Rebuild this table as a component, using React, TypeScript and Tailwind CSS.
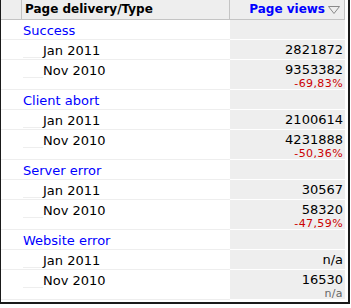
type Row = { label: string; value: string; change?: string; changeMuted?: boolean };
type Group = { name: string; rows: Row[] };

const groups: Group[] = [
  {
    name: "Success",
    rows: [
      { label: "Jan 2011", value: "2821872" },
      { label: "Nov 2010", value: "9353382", change: "-69,83%" },
    ],
  },
  {
    name: "Client abort",
    rows: [
      { label: "Jan 2011", value: "2100614" },
      { label: "Nov 2010", value: "4231888", change: "-50,36%" },
    ],
  },
  {
    name: "Server error",
    rows: [
      { label: "Jan 2011", value: "30567" },
      { label: "Nov 2010", value: "58320", change: "-47,59%" },
    ],
  },
  {
    name: "Website error",
    rows: [
      { label: "Jan 2011", value: "n/a" },
      { label: "Nov 2010", value: "16530", change: "n/a", changeMuted: true },
    ],
  },
];

const SortIcon = () => (
  <svg width="12" height="8" viewBox="0 0 12 8" className="ml-[3px]">
    <path d="M0.5 0.5 L11.5 0.5 L6 7.5 Z" fill="none" stroke="#8a8a8a" strokeWidth="1" />
  </svg>
);

export default function App() {
  return (
    <div
      className="w-[350px] h-[304px] bg-white border-l border-r-2 border-b-2 border-[#1a1a1a] pr-[3px] text-[13px] text-black"
      style={{ fontFamily: '"DejaVu Sans", Verdana, sans-serif' }}
    >
      <div className="w-[344px]">
        {/* Encabezado */}
        <div className="flex h-[20px] bg-[#eeeeee] border-b border-[#c4c4c4] text-[12px] font-bold">
          <div className="w-[21px] border-r border-[#c4c4c4]" />
          <div className="w-[208px] border-r border-[#c4c4c4] pl-[3px] leading-[19px]">
            Page delivery/Type
          </div>
          <div className="w-[115px] border-r border-[#c4c4c4] flex items-center justify-end pr-[4px] text-[#0000ff] leading-[19px]">
            <span>Page views</span>
            <SortIcon />
          </div>
        </div>

        {/* Filas */}
        {groups.map((group) => (
          <div key={group.name}>
            <div className="flex h-[20px]">
              <div className="w-[229px] border-b border-[#eeeeee] pl-[22px] pt-[1px] leading-[19px] text-[#0000ff]">
                {group.name}
              </div>
              <div className="w-[115px] bg-[#eeeeee] border-b border-white" />
            </div>
            {group.rows.map((row) => (
              <div key={row.label} className={`flex ${row.change ? "h-[30px]" : "h-[20px]"}`}>
                <div className="w-[229px] flex border-b border-[#eeeeee] pl-[22px]">
                  <div className="w-[20px] h-[18px] border-b border-[#eeeeee]" />
                  <div className="pt-[1px] leading-[20px]">{row.label}</div>
                </div>
                <div className="w-[115px] bg-[#eeeeee] border-b border-white pr-[2px] pt-[1px] text-right">
                  <div className="leading-[18px]">{row.value}</div>
                  {row.change && (
                    <div
                      className={`text-[11px] leading-[10px] tracking-[0.4px] ${
                        row.changeMuted ? "text-[#666666]" : "text-[#cc0000]"
                      }`}
                    >
                      {row.change}
                    </div>
                  )}
                </div>
              </div>
            ))}
          </div>
        ))}
      </div>
    </div>
  );
}
